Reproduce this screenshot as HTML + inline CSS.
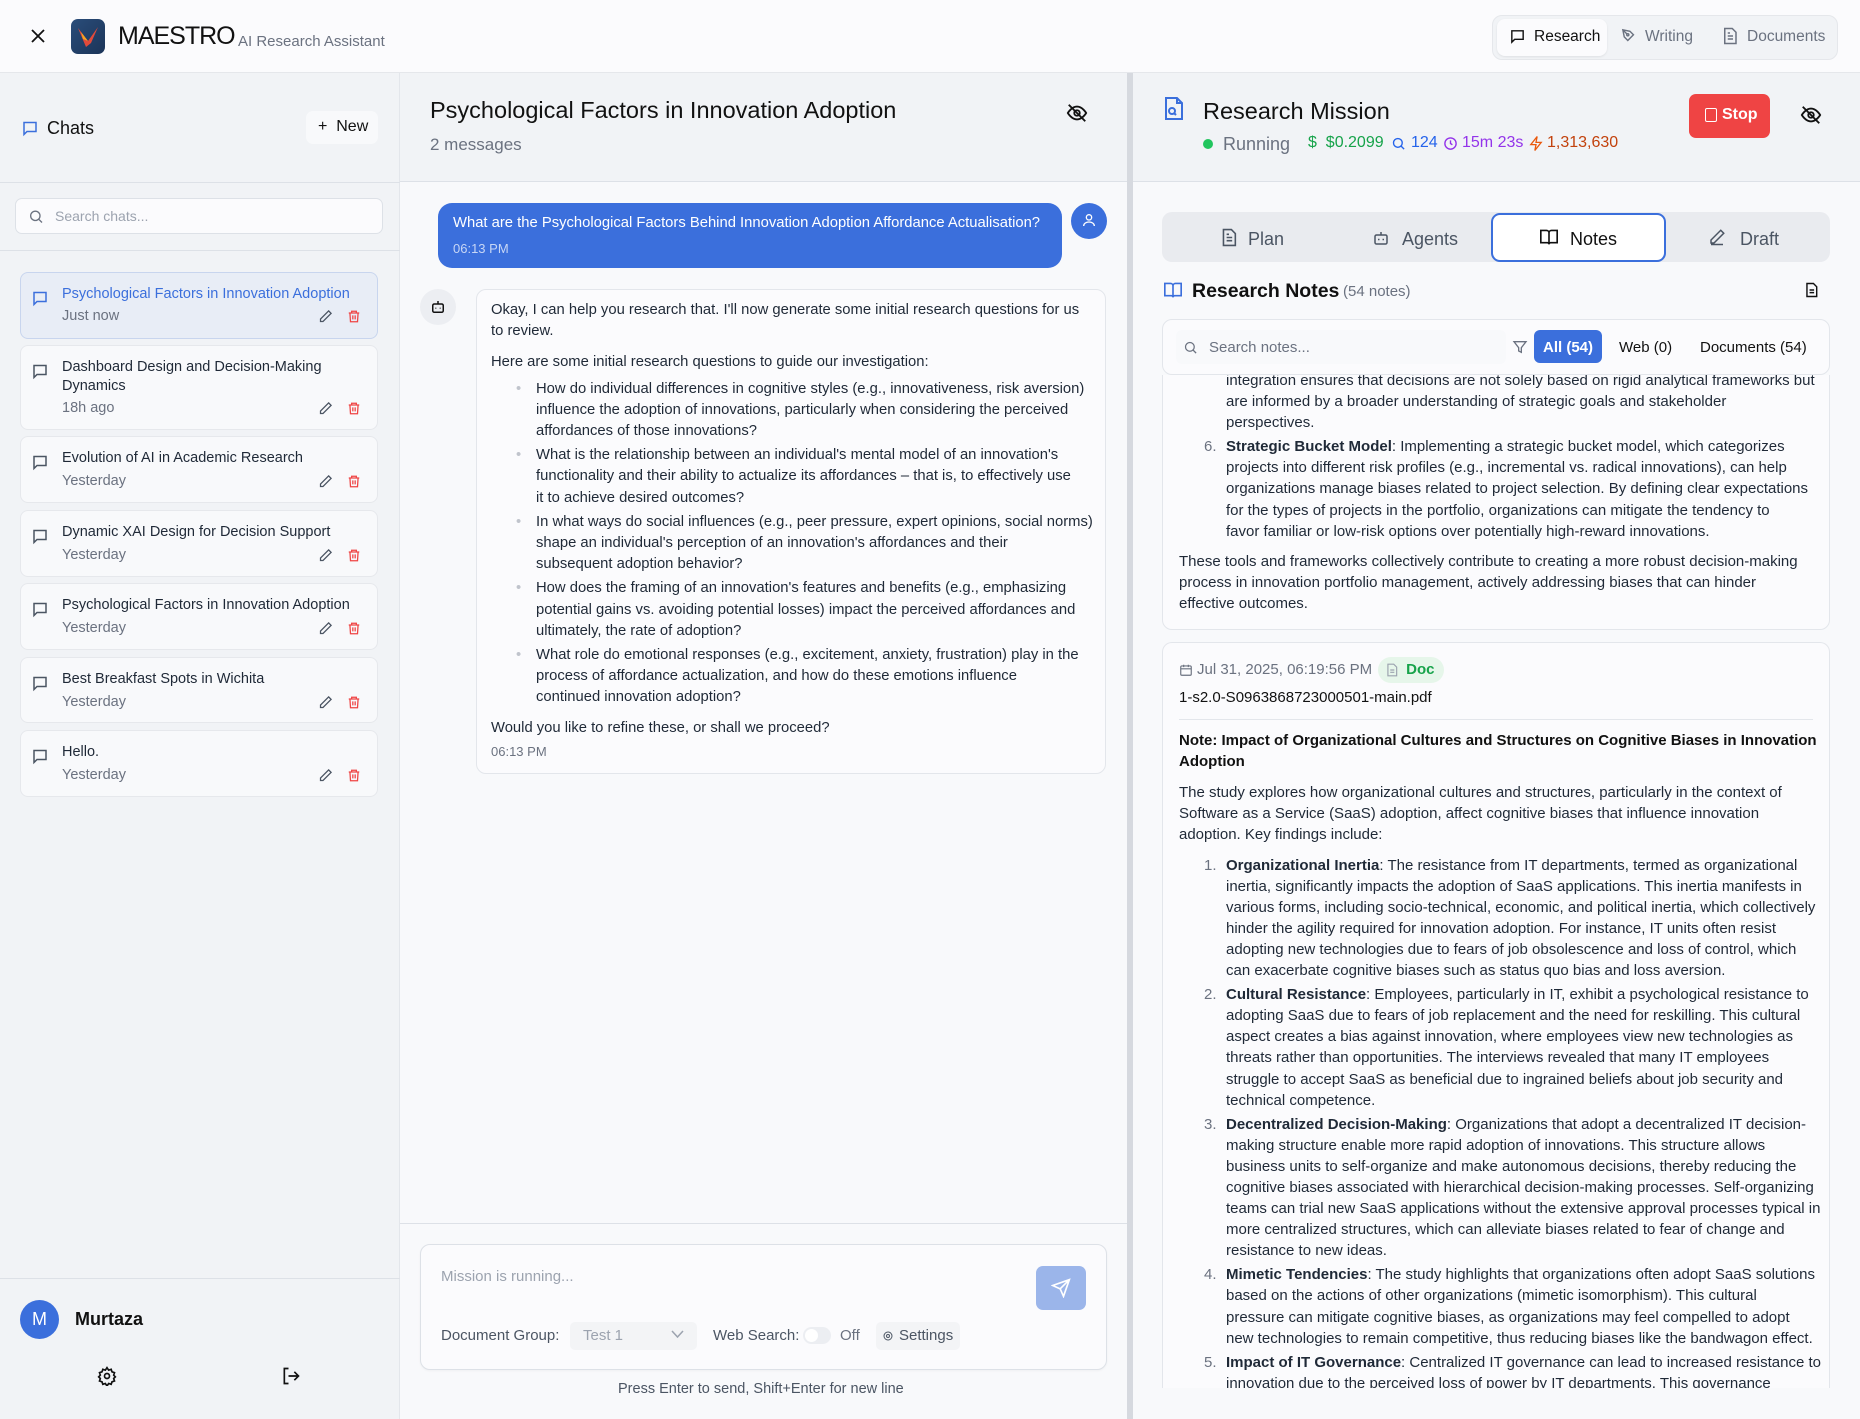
<!DOCTYPE html>
<html style="overflow:hidden;width:1860px;height:1419px"><head><meta charset="utf-8">
<style>
*{box-sizing:border-box;margin:0;padding:0}
body{width:1860px;height:1419px;overflow:hidden;font-family:"Liberation Sans",sans-serif;background:#f8f9fb;color:#111827;position:relative}
.abs{position:absolute}
svg{display:block}
.hdr{left:0;top:0;width:1860px;height:73px;background:#fbfbfd;border-bottom:1px solid #e5e7eb;box-shadow:0 1px 3px rgba(0,0,0,.05)}
.side{left:0;top:73px;width:400px;height:1346px;background:#f1f3f6;border-right:1px solid #e3e6eb}
.item{position:absolute;left:20px;width:358px;background:#f8f9fb;border:1px solid #e6e8ec;border-radius:8px}
.item .t{position:absolute;left:41px;top:12px;font-size:14.5px;line-height:19px;color:#1f2937}
.item .d{position:absolute;left:41px;font-size:14.5px;color:#6b7280}
.item .ic{position:absolute;left:10px;top:16px}
.item .ed{position:absolute;right:44px}
.item .tr{position:absolute;right:16px}
.chat{font-size:14.8px;line-height:21.2px;color:#1f2937}
.notes{font-size:15px;line-height:21.1px;color:#1f2937;white-space:nowrap}
.li{position:relative;padding-left:47px}
.li .n{position:absolute;left:25px;color:#6b7280}
</style></head><body>

<!-- HEADER -->
<div class="abs hdr"></div>
<div class="abs" style="left:30px;top:28px"><svg width="16" height="16" viewBox="0 0 16 16"><path d="M2 2L14 14M14 2L2 14" stroke="#111" stroke-width="1.8"/></svg></div>
<div class="abs" style="left:71px;top:19px;width:34px;height:35px;border-radius:7px;background:linear-gradient(135deg,#2a4d7a,#1b3458)">
<svg width="34" height="35" viewBox="0 0 34 35"><path d="M7 9 L17 22 L27 8 L20 24 L15 28 Z" fill="#e24a3b"/><path d="M10 13 L17 22 L12 20Z" fill="#f5a623"/></svg></div>
<div class="abs" style="left:118px;top:22px;font-size:25px;letter-spacing:-1px;color:#111">MAESTRO</div>
<div class="abs" style="left:238px;top:33px;font-size:15px;color:#6b7280">AI Research Assistant</div>

<div class="abs" style="left:1492px;top:15px;width:346px;height:45px;background:#f1f3f6;border:1px solid #e5e7eb;border-radius:10px"></div>
<div class="abs" style="left:1497px;top:19px;width:110px;height:37px;background:#fbfbfd;border-radius:8px;box-shadow:0 1px 2px rgba(0,0,0,.08)"></div>
<div class="abs" style="left:1509px;top:28px"><svg width="17" height="17" viewBox="0 0 24 24" fill="none" stroke="#111" stroke-width="2"><path d="M4 4h16v12H8l-4 4z"/></svg></div>
<div class="abs" style="left:1534px;top:28px;font-size:15.5px;color:#111">Research</div>
<div class="abs" style="left:1620px;top:27px"><svg width="17" height="17" viewBox="0 0 24 24" fill="none" stroke="#6b7280" stroke-width="2"><path d="M4 4l10 2 5 5-8 8-5-5zM4 4l6 6"/><circle cx="11" cy="11" r="1.5"/></svg></div>
<div class="abs" style="left:1645px;top:28px;font-size:15.5px;color:#6b7280">Writing</div>
<div class="abs" style="left:1722px;top:27px"><svg width="16" height="18" viewBox="0 0 20 24" fill="none" stroke="#6b7280" stroke-width="2"><path d="M3 2h10l5 5v15H3z"/><path d="M7 12h7M7 16h7M7 8h3"/></svg></div>
<div class="abs" style="left:1747px;top:28px;font-size:15.5px;color:#6b7280">Documents</div>

<!-- SIDEBAR -->
<div class="abs side"></div>
<div class="abs" style="left:21px;top:119px"><svg width="18" height="19" viewBox="0 0 24 24" fill="none" stroke="#3b6fdc" stroke-width="2"><path d="M4 4h16v12H8l-4 4z"/></svg></div>
<div class="abs" style="left:47px;top:118px;font-size:18px;color:#111">Chats</div>
<div class="abs" style="left:306px;top:111px;width:72px;height:33px;background:#f8f9fb;border-radius:7px"></div>
<div class="abs" style="left:318px;top:118px;font-size:16px;color:#111">+&nbsp; New</div>
<div class="abs" style="left:0;top:182px;width:400px;border-top:1px solid #dde1e7"></div>
<div class="abs" style="left:15px;top:198px;width:368px;height:36px;background:#fbfbfd;border:1px solid #dde1e7;border-radius:7px"></div>
<div class="abs" style="left:28px;top:208px"><svg width="16" height="17" viewBox="0 0 24 24" fill="none" stroke="#6b7280" stroke-width="2"><circle cx="11" cy="11" r="7"/><path d="M16 16l5 5"/></svg></div>
<div class="abs" style="left:55px;top:208px;font-size:14px;color:#9ca3af">Search chats...</div>
<div class="abs" style="left:0;top:250px;width:400px;border-top:1px solid #dde1e7"></div>

<div class="item" style="top:272px;height:67px;background:#e8edf6;border-color:#c8d5ee">
<div class="ic"><svg width="18" height="19" viewBox="0 0 24 24" fill="none" stroke="#3b6fdc" stroke-width="2"><path d="M4 4h16v12H8l-4 4z"/></svg></div>
<div class="t" style="color:#3b6fdc">Psychological Factors in Innovation Adoption</div>
<div class="d" style="top:35px">Just now</div>
<div class="ed" style="top:36px"><svg width="15" height="15" viewBox="0 0 24 24" fill="none" stroke="#4b5563" stroke-width="2"><path d="M17 3l4 4L8 20H4v-4z"/></svg></div>
<div class="tr" style="top:36px"><svg width="14" height="15" viewBox="0 0 24 24" fill="none" stroke="#ef4444" stroke-width="2.2"><path d="M3 6h18M8 6V3h8v3M5 6l1 15h12l1-15M10 10v7M14 10v7"/></svg></div>
</div>

<div class="item" style="top:345px;height:85px">
<div class="ic"><svg width="18" height="19" viewBox="0 0 24 24" fill="none" stroke="#4b5563" stroke-width="2"><path d="M4 4h16v12H8l-4 4z"/></svg></div>
<div class="t">Dashboard Design and Decision-Making<br>Dynamics</div>
<div class="d" style="top:54px">18h ago</div>
<div class="ed" style="top:55px"><svg width="15" height="15" viewBox="0 0 24 24" fill="none" stroke="#4b5563" stroke-width="2"><path d="M17 3l4 4L8 20H4v-4z"/></svg></div>
<div class="tr" style="top:55px"><svg width="14" height="15" viewBox="0 0 24 24" fill="none" stroke="#ef4444" stroke-width="2.2"><path d="M3 6h18M8 6V3h8v3M5 6l1 15h12l1-15M10 10v7M14 10v7"/></svg></div>
</div>

<div class="item" style="top:436px;height:67px">
<div class="ic"><svg width="18" height="19" viewBox="0 0 24 24" fill="none" stroke="#4b5563" stroke-width="2"><path d="M4 4h16v12H8l-4 4z"/></svg></div>
<div class="t">Evolution of AI in Academic Research</div>
<div class="d" style="top:36px">Yesterday</div>
<div class="ed" style="top:37px"><svg width="15" height="15" viewBox="0 0 24 24" fill="none" stroke="#4b5563" stroke-width="2"><path d="M17 3l4 4L8 20H4v-4z"/></svg></div>
<div class="tr" style="top:37px"><svg width="14" height="15" viewBox="0 0 24 24" fill="none" stroke="#ef4444" stroke-width="2.2"><path d="M3 6h18M8 6V3h8v3M5 6l1 15h12l1-15M10 10v7M14 10v7"/></svg></div>
</div>

<div class="item" style="top:510px;height:67px">
<div class="ic"><svg width="18" height="19" viewBox="0 0 24 24" fill="none" stroke="#4b5563" stroke-width="2"><path d="M4 4h16v12H8l-4 4z"/></svg></div>
<div class="t">Dynamic XAI Design for Decision Support</div>
<div class="d" style="top:36px">Yesterday</div>
<div class="ed" style="top:37px"><svg width="15" height="15" viewBox="0 0 24 24" fill="none" stroke="#4b5563" stroke-width="2"><path d="M17 3l4 4L8 20H4v-4z"/></svg></div>
<div class="tr" style="top:37px"><svg width="14" height="15" viewBox="0 0 24 24" fill="none" stroke="#ef4444" stroke-width="2.2"><path d="M3 6h18M8 6V3h8v3M5 6l1 15h12l1-15M10 10v7M14 10v7"/></svg></div>
</div>

<div class="item" style="top:583px;height:67px">
<div class="ic"><svg width="18" height="19" viewBox="0 0 24 24" fill="none" stroke="#4b5563" stroke-width="2"><path d="M4 4h16v12H8l-4 4z"/></svg></div>
<div class="t">Psychological Factors in Innovation Adoption</div>
<div class="d" style="top:36px">Yesterday</div>
<div class="ed" style="top:37px"><svg width="15" height="15" viewBox="0 0 24 24" fill="none" stroke="#4b5563" stroke-width="2"><path d="M17 3l4 4L8 20H4v-4z"/></svg></div>
<div class="tr" style="top:37px"><svg width="14" height="15" viewBox="0 0 24 24" fill="none" stroke="#ef4444" stroke-width="2.2"><path d="M3 6h18M8 6V3h8v3M5 6l1 15h12l1-15M10 10v7M14 10v7"/></svg></div>
</div>

<div class="item" style="top:657px;height:66px">
<div class="ic"><svg width="18" height="19" viewBox="0 0 24 24" fill="none" stroke="#4b5563" stroke-width="2"><path d="M4 4h16v12H8l-4 4z"/></svg></div>
<div class="t">Best Breakfast Spots in Wichita</div>
<div class="d" style="top:36px">Yesterday</div>
<div class="ed" style="top:37px"><svg width="15" height="15" viewBox="0 0 24 24" fill="none" stroke="#4b5563" stroke-width="2"><path d="M17 3l4 4L8 20H4v-4z"/></svg></div>
<div class="tr" style="top:37px"><svg width="14" height="15" viewBox="0 0 24 24" fill="none" stroke="#ef4444" stroke-width="2.2"><path d="M3 6h18M8 6V3h8v3M5 6l1 15h12l1-15M10 10v7M14 10v7"/></svg></div>
</div>

<div class="item" style="top:730px;height:67px">
<div class="ic"><svg width="18" height="19" viewBox="0 0 24 24" fill="none" stroke="#4b5563" stroke-width="2"><path d="M4 4h16v12H8l-4 4z"/></svg></div>
<div class="t">Hello.</div>
<div class="d" style="top:36px">Yesterday</div>
<div class="ed" style="top:37px"><svg width="15" height="15" viewBox="0 0 24 24" fill="none" stroke="#4b5563" stroke-width="2"><path d="M17 3l4 4L8 20H4v-4z"/></svg></div>
<div class="tr" style="top:37px"><svg width="14" height="15" viewBox="0 0 24 24" fill="none" stroke="#ef4444" stroke-width="2.2"><path d="M3 6h18M8 6V3h8v3M5 6l1 15h12l1-15M10 10v7M14 10v7"/></svg></div>
</div>

<div class="abs" style="left:0;top:1278px;width:400px;border-top:1px solid #dde1e7"></div>
<div class="abs" style="left:20px;top:1300px;width:39px;height:39px;border-radius:50%;background:#3b6fdc;color:#fff;font-size:18px;text-align:center;line-height:39px">M</div>
<div class="abs" style="left:75px;top:1309px;font-size:18px;font-weight:bold;color:#111">Murtaza</div>
<div class="abs" style="left:97px;top:1366px"><svg width="20" height="20" viewBox="0 0 24 24" fill="none" stroke="#111" stroke-width="2"><circle cx="12" cy="12" r="3"/><path d="M12 2l2 3 3-1 1 3 3 1-1 3 2 2-2 2 1 3-3 1-1 3-3-1-2 3-2-3-3 1-1-3-3-1 1-3-2-2 2-2-1-3 3-1 1-3 3 1z"/></svg></div>
<div class="abs" style="left:281px;top:1366px"><svg width="20" height="20" viewBox="0 0 24 24" fill="none" stroke="#111" stroke-width="2"><path d="M9 3H4v18h5M16 7l5 5-5 5M21 12H9"/></svg></div>

<!-- CHAT -->
<div class="abs" style="left:400px;top:73px;width:727px;height:109px;background:#f1f3f6;border-bottom:1px solid #dde1e7"></div>
<div class="abs" style="left:430px;top:97px;font-size:23.5px;color:#111">Psychological Factors in Innovation Adoption</div>
<div class="abs" style="left:430px;top:135px;font-size:17px;color:#6b7280">2 messages</div>
<div class="abs" style="left:1066px;top:102px"><svg width="22" height="22" viewBox="0 0 24 24" fill="none" stroke="#111" stroke-width="2"><path d="M2 12s4-7 10-7 10 7 10 7-4 7-10 7S2 12 2 12z"/><circle cx="12" cy="12" r="3"/><path d="M3 3l18 18"/></svg></div>

<div class="abs" style="left:438px;top:203px;width:624px;height:65px;background:#3b6fdc;border-radius:14px"></div>
<div class="abs" style="left:453px;top:215px;font-size:14.8px;color:#fff;white-space:nowrap">What are the Psychological Factors Behind Innovation Adoption Affordance Actualisation?</div>
<div class="abs" style="left:453px;top:241px;font-size:13px;color:#c7d6f5">06:13 PM</div>
<div class="abs" style="left:1071px;top:203px;width:36px;height:36px;border-radius:50%;background:#3b6fdc"></div>
<div class="abs" style="left:1081px;top:212px"><svg width="16" height="16" viewBox="0 0 24 24" fill="none" stroke="#fff" stroke-width="2"><circle cx="12" cy="8" r="4"/><path d="M4 21c0-4 4-6 8-6s8 2 8 6"/></svg></div>

<div class="abs" style="left:420px;top:289px;width:36px;height:36px;border-radius:50%;background:#eceef2"></div>
<div class="abs" style="left:429px;top:298px"><svg width="18" height="18" viewBox="0 0 24 24" fill="none" stroke="#111" stroke-width="2"><rect x="5" y="8" width="14" height="11" rx="2"/><path d="M12 4v4M9 13v1M15 13v1"/></svg></div>
<div class="abs chat" style="left:476px;top:289px;width:630px;height:485px;background:#fbfbfd;border:1px solid #e3e6eb;border-radius:10px;padding:10px 14px;white-space:nowrap">
<div>Okay, I can help you research that. I'll now generate some initial research questions for us</div>
<div>to review.</div>
<div style="margin-top:10px">Here are some initial research questions to guide our investigation:</div>
<div style="padding-left:45px;margin-top:5px;position:relative">
<div style="position:relative"><span style="position:absolute;left:-20px;color:#c0c4cc">•</span>How do individual differences in cognitive styles (e.g., innovativeness, risk aversion)<br>influence the adoption of innovations, particularly when considering the perceived<br>affordances of those innovations?</div>
<div style="position:relative;margin-top:3px"><span style="position:absolute;left:-20px;color:#c0c4cc">•</span>What is the relationship between an individual's mental model of an innovation's<br>functionality and their ability to actualize its affordances – that is, to effectively use<br>it to achieve desired outcomes?</div>
<div style="position:relative;margin-top:3px"><span style="position:absolute;left:-20px;color:#c0c4cc">•</span>In what ways do social influences (e.g., peer pressure, expert opinions, social norms)<br>shape an individual's perception of an innovation's affordances and their<br>subsequent adoption behavior?</div>
<div style="position:relative;margin-top:3px"><span style="position:absolute;left:-20px;color:#c0c4cc">•</span>How does the framing of an innovation's features and benefits (e.g., emphasizing<br>potential gains vs. avoiding potential losses) impact the perceived affordances and<br>ultimately, the rate of adoption?</div>
<div style="position:relative;margin-top:3px"><span style="position:absolute;left:-20px;color:#c0c4cc">•</span>What role do emotional responses (e.g., excitement, anxiety, frustration) play in the<br>process of affordance actualization, and how do these emotions influence<br>continued innovation adoption?</div>
</div>
<div style="margin-top:9px">Would you like to refine these, or shall we proceed?</div>
<div style="font-size:13px;color:#6b7280;margin-top:2px">06:13 PM</div>
</div>

<div class="abs" style="left:400px;top:1223px;width:727px;border-top:1px solid #dde1e7"></div>
<div class="abs" style="left:420px;top:1244px;width:687px;height:126px;background:#fbfbfd;border:1px solid #dde1e7;border-radius:10px;box-shadow:0 1px 2px rgba(0,0,0,.04)"></div>
<div class="abs" style="left:441px;top:1268px;font-size:15px;color:#9ca3af">Mission is running...</div>
<div class="abs" style="left:1036px;top:1266px;width:50px;height:44px;border-radius:7px;background:#9bb5ea"></div>
<div class="abs" style="left:1051px;top:1278px"><svg width="20" height="20" viewBox="0 0 24 24" fill="none" stroke="#fff" stroke-width="2"><path d="M22 2L11 13M22 2l-7 20-4-9-9-4z"/></svg></div>
<div class="abs" style="left:441px;top:1327px;font-size:15px;color:#4b5563">Document Group:</div>
<div class="abs" style="left:570px;top:1322px;width:127px;height:28px;background:#f3f4f6;border-radius:5px"></div>
<div class="abs" style="left:583px;top:1327px;font-size:15px;color:#9ca3af">Test 1</div>
<div class="abs" style="left:671px;top:1330px"><svg width="13" height="9" viewBox="0 0 13 9" fill="none" stroke="#9ca3af" stroke-width="1.5"><path d="M1 1l5.5 6L12 1"/></svg></div>
<div class="abs" style="left:713px;top:1327px;font-size:15px;color:#4b5563">Web Search:</div>
<div class="abs" style="left:803px;top:1327px;width:28px;height:17px;border-radius:9px;background:#eceef2"></div>
<div class="abs" style="left:805px;top:1329px;width:13px;height:13px;border-radius:50%;background:#fff"></div>
<div class="abs" style="left:840px;top:1327px;font-size:15px;color:#6b7280">Off</div>
<div class="abs" style="left:876px;top:1322px;width:84px;height:28px;background:#f3f4f6;border-radius:5px"></div>
<div class="abs" style="left:882px;top:1330px"><svg width="12" height="12" viewBox="0 0 24 24" fill="none" stroke="#4b5563" stroke-width="2"><circle cx="12" cy="12" r="3"/><circle cx="12" cy="12" r="8"/></svg></div>
<div class="abs" style="left:899px;top:1327px;font-size:15px;color:#4b5563">Settings</div>
<div class="abs" style="left:618px;top:1381px;font-size:14.5px;color:#4b5563">Press Enter to send, Shift+Enter for new line</div>

<!-- SPLITTER -->
<div class="abs" style="left:1127px;top:73px;width:6px;height:1346px;background:#d6d9df"></div>

<!-- RIGHT PANEL -->
<div class="abs" style="left:1133px;top:73px;width:727px;height:109px;background:#f1f3f6;border-bottom:1px solid #dde1e7"></div>
<div class="abs" style="left:1163px;top:96px"><svg width="22" height="25" viewBox="0 0 22 25" fill="none" stroke="#3b6fdc" stroke-width="2"><path d="M3 2h11l5 5v16H3z"/><path d="M14 2v5h5"/><circle cx="9" cy="15" r="3"/><path d="M11 17l2 2"/></svg></div>
<div class="abs" style="left:1203px;top:98px;font-size:23.5px;color:#111">Research Mission</div>
<div class="abs" style="left:1203px;top:139px;width:10px;height:10px;border-radius:50%;background:#22c55e"></div>
<div class="abs" style="left:1223px;top:134px;font-size:18px;color:#6b7280">Running</div>
<div class="abs" style="left:1308px;top:134px;font-size:16px;color:#16a34a">$&nbsp; $0.2099</div>
<div class="abs" style="left:1391px;top:136px"><svg width="15" height="15" viewBox="0 0 24 24" fill="none" stroke="#2563eb" stroke-width="2.2"><circle cx="11" cy="11" r="7"/><path d="M16 16l5 5"/></svg></div>
<div class="abs" style="left:1411px;top:134px;font-size:16px;color:#2563eb">124</div>
<div class="abs" style="left:1443px;top:136px"><svg width="15" height="15" viewBox="0 0 24 24" fill="none" stroke="#9333ea" stroke-width="2.2"><circle cx="12" cy="12" r="9"/><path d="M12 7v5l3 2"/></svg></div>
<div class="abs" style="left:1462px;top:134px;font-size:16px;color:#9333ea">15m 23s</div>
<div class="abs" style="left:1529px;top:135px"><svg width="14" height="17" viewBox="0 0 24 28" fill="none" stroke="#ea580c" stroke-width="2.2"><path d="M14 2L3 16h9l-2 10 11-14h-9z"/></svg></div>
<div class="abs" style="left:1547px;top:134px;font-size:16px;color:#c2410c">1,313,630</div>
<div class="abs" style="left:1689px;top:94px;width:81px;height:44px;border-radius:7px;background:#ef4444"></div>
<div class="abs" style="left:1705px;top:108px;width:12px;height:14px;border:1.5px solid #fff;border-radius:2px"></div>
<div class="abs" style="left:1722px;top:106px;font-size:16px;font-weight:bold;color:#fff">Stop</div>
<div class="abs" style="left:1800px;top:104px"><svg width="22" height="22" viewBox="0 0 24 24" fill="none" stroke="#111" stroke-width="2"><path d="M2 12s4-7 10-7 10 7 10 7-4 7-10 7S2 12 2 12z"/><circle cx="12" cy="12" r="3"/><path d="M3 3l18 18"/></svg></div>

<div class="abs" style="left:1162px;top:212px;width:668px;height:50px;background:#e9ebef;border-radius:10px"></div>
<div class="abs" style="left:1221px;top:228px"><svg width="16" height="19" viewBox="0 0 20 24" fill="none" stroke="#4b5563" stroke-width="2"><path d="M3 2h10l5 5v15H3z"/><path d="M7 12h7M7 16h7M7 8h3"/></svg></div>
<div class="abs" style="left:1248px;top:229px;font-size:18px;color:#4b5563">Plan</div>
<div class="abs" style="left:1372px;top:229px"><svg width="18" height="18" viewBox="0 0 24 24" fill="none" stroke="#4b5563" stroke-width="2"><rect x="4" y="8" width="16" height="12" rx="2"/><path d="M12 4v4M9 13v2M15 13v2"/></svg></div>
<div class="abs" style="left:1402px;top:229px;font-size:18px;color:#4b5563">Agents</div>
<div class="abs" style="left:1491px;top:213px;width:175px;height:49px;background:#fff;border:2px solid #3b6fdc;border-radius:9px"></div>
<div class="abs" style="left:1539px;top:228px"><svg width="20" height="18" viewBox="0 0 24 22" fill="none" stroke="#111" stroke-width="2"><path d="M2 3h7a3 3 0 0 1 3 3v14a2 2 0 0 0-2-2H2zM22 3h-7a3 3 0 0 0-3 3v14a2 2 0 0 1 2-2h8z"/></svg></div>
<div class="abs" style="left:1570px;top:229px;font-size:18px;color:#111">Notes</div>
<div class="abs" style="left:1708px;top:228px"><svg width="18" height="18" viewBox="0 0 24 24" fill="none" stroke="#4b5563" stroke-width="2"><path d="M17 3l4 4L8 20H4v-4zM4 22h16"/></svg></div>
<div class="abs" style="left:1740px;top:229px;font-size:18px;color:#4b5563">Draft</div>

<div class="abs" style="left:1163px;top:281px"><svg width="20" height="18" viewBox="0 0 24 22" fill="none" stroke="#3b6fdc" stroke-width="2"><path d="M2 3h7a3 3 0 0 1 3 3v14a2 2 0 0 0-2-2H2zM22 3h-7a3 3 0 0 0-3 3v14a2 2 0 0 1 2-2h8z"/></svg></div>
<div class="abs" style="left:1192px;top:280px;font-size:19.5px;font-weight:bold;color:#111">Research Notes</div>
<div class="abs" style="left:1343px;top:283px;font-size:15px;color:#6b7280">(54 notes)</div>
<div class="abs" style="left:1805px;top:282px"><svg width="13" height="16" viewBox="0 0 20 24" fill="none" stroke="#111" stroke-width="2.2"><path d="M3 2h10l5 5v15H3z"/><path d="M7 12h7M7 16h7"/></svg></div>

<div class="abs" style="left:1162px;top:319px;width:668px;height:56px;background:#fbfbfd;border:1px solid #e3e6eb;border-radius:10px"></div>
<div class="abs" style="left:1176px;top:330px;width:330px;height:34px;background:#f8f9fb;border-radius:6px"></div>
<div class="abs" style="left:1183px;top:340px"><svg width="15" height="15" viewBox="0 0 24 24" fill="none" stroke="#6b7280" stroke-width="2"><circle cx="11" cy="11" r="7"/><path d="M16 16l5 5"/></svg></div>
<div class="abs" style="left:1209px;top:339px;font-size:15px;color:#6b7280">Search notes...</div>
<div class="abs" style="left:1512px;top:339px"><svg width="16" height="16" viewBox="0 0 24 24" fill="none" stroke="#6b7280" stroke-width="2"><path d="M3 4h18l-7 9v7l-4-2v-5z"/></svg></div>
<div class="abs" style="left:1534px;top:330px;width:68px;height:33px;border-radius:6px;background:#3b6fdc"></div>
<div class="abs" style="left:1543px;top:339px;font-size:15px;font-weight:bold;color:#fff">All (54)</div>
<div class="abs" style="left:1619px;top:339px;font-size:15px;color:#111">Web (0)</div>
<div class="abs" style="left:1700px;top:339px;font-size:15px;color:#111">Documents (54)</div>

<div class="abs" style="left:1162px;top:375px;width:668px;height:1013px;overflow:hidden">
 <div class="abs notes" style="left:0;top:-200px;width:668px;height:455px;background:#fbfbfd;border:1px solid #e3e6eb;border-radius:10px;padding:0 16px 15px;display:flex;flex-direction:column;justify-content:flex-end">
  <div class="li">integration ensures that decisions are not solely based on rigid analytical frameworks but<br>are informed by a broader understanding of strategic goals and stakeholder<br>perspectives.</div>
  <div class="li" style="margin-top:3px"><span class="n">6.</span><b>Strategic Bucket Model</b>: Implementing a strategic bucket model, which categorizes<br>projects into different risk profiles (e.g., incremental vs. radical innovations), can help<br>organizations manage biases related to project selection. By defining clear expectations<br>for the types of projects in the portfolio, organizations can mitigate the tendency to<br>favor familiar or low-risk options over potentially high-reward innovations.</div>
  <div style="margin-top:9px">These tools and frameworks collectively contribute to creating a more robust decision-making<br>process in innovation portfolio management, actively addressing biases that can hinder<br>effective outcomes.</div>
 </div>
 <div class="abs notes" style="left:0;top:267px;width:668px;height:746px;overflow:hidden;background:#fbfbfd;border:1px solid #e3e6eb;border-bottom:none;border-radius:10px 10px 0 0;padding:14px 16px">
  <div style="display:flex;align-items:center;height:26px">
   <svg width="14" height="14" viewBox="0 0 24 24" fill="none" stroke="#6b7280" stroke-width="2"><rect x="3" y="5" width="18" height="16" rx="2"/><path d="M3 10h18M8 3v4M16 3v4"/></svg>
   <span style="color:#6b7280;margin-left:4px">Jul 31, 2025, 06:19:56 PM</span>
   <span style="margin-left:6px;background:#e6f6ea;border-radius:13px;padding:2px 10px 2px 8px;color:#16a34a;font-weight:bold;display:flex;align-items:center"><svg width="12" height="14" viewBox="0 0 20 24" fill="none" stroke="#9ca3af" stroke-width="2" style="margin-right:8px"><path d="M3 2h10l5 5v15H3z"/><path d="M7 12h7M7 16h7"/></svg>Doc</span>
  </div>
  <div style="margin-top:4px;font-weight:500;color:#111">1-s2.0-S0963868723000501-main.pdf</div>
  <div style="border-top:1px solid #e3e6eb;margin:11px 0 10px"></div>
  <div style="font-weight:bold;color:#111">Note: Impact of Organizational Cultures and Structures on Cognitive Biases in Innovation<br>Adoption</div>
  <div style="margin-top:10px">The study explores how organizational cultures and structures, particularly in the context of<br>Software as a Service (SaaS) adoption, affect cognitive biases that influence innovation<br>adoption. Key findings include:</div>
  <div class="li" style="margin-top:9px"><span class="n">1.</span><b>Organizational Inertia</b>: The resistance from IT departments, termed as organizational<br>inertia, significantly impacts the adoption of SaaS applications. This inertia manifests in<br>various forms, including socio-technical, economic, and political inertia, which collectively<br>hinder the agility required for innovation adoption. For instance, IT units often resist<br>adopting new technologies due to fears of job obsolescence and loss of control, which<br>can exacerbate cognitive biases such as status quo bias and loss aversion.</div>
  <div class="li" style="margin-top:3px"><span class="n">2.</span><b>Cultural Resistance</b>: Employees, particularly in IT, exhibit a psychological resistance to<br>adopting SaaS due to fears of job replacement and the need for reskilling. This cultural<br>aspect creates a bias against innovation, where employees view new technologies as<br>threats rather than opportunities. The interviews revealed that many IT employees<br>struggle to accept SaaS as beneficial due to ingrained beliefs about job security and<br>technical competence.</div>
  <div class="li" style="margin-top:3px"><span class="n">3.</span><b>Decentralized Decision-Making</b>: Organizations that adopt a decentralized IT decision-<br>making structure enable more rapid adoption of innovations. This structure allows<br>business units to self-organize and make autonomous decisions, thereby reducing the<br>cognitive biases associated with hierarchical decision-making processes. Self-organizing<br>teams can trial new SaaS applications without the extensive approval processes typical in<br>more centralized structures, which can alleviate biases related to fear of change and<br>resistance to new ideas.</div>
  <div class="li" style="margin-top:3px"><span class="n">4.</span><b>Mimetic Tendencies</b>: The study highlights that organizations often adopt SaaS solutions<br>based on the actions of other organizations (mimetic isomorphism). This cultural<br>pressure can mitigate cognitive biases, as organizations may feel compelled to adopt<br>new technologies to remain competitive, thus reducing biases like the bandwagon effect.</div>
  <div class="li" style="margin-top:3px"><span class="n">5.</span><b>Impact of IT Governance</b>: Centralized IT governance can lead to increased resistance to<br>innovation due to the perceived loss of power by IT departments. This governance<br>structure can reinforce biases.</div>
 </div>
</div>
</body></html>
